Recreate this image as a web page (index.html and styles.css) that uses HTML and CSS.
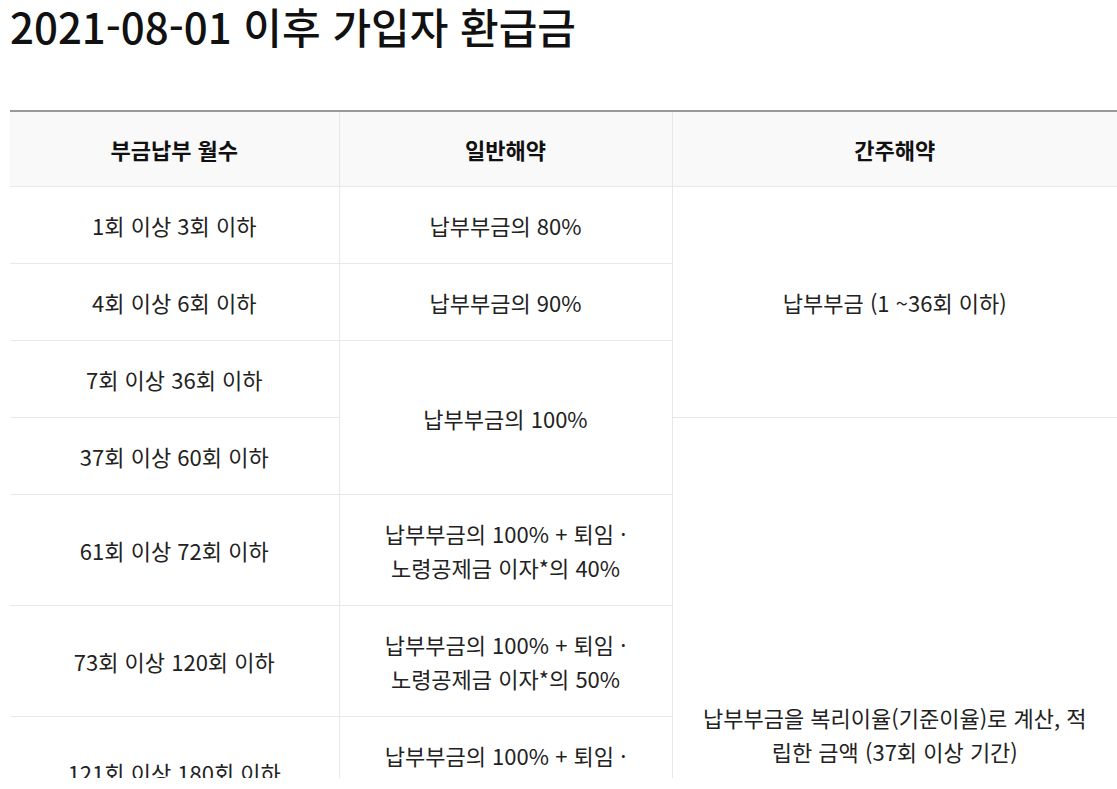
FILE: index.html
```html
<!DOCTYPE html>
<html lang="ko">
<head>
<meta charset="utf-8">
<title>2021-08-01 이후 가입자 환급금</title>
<link rel="stylesheet" href="styles.css">
</head>
<body>
<div class="page">
  <h2 class="title">2021-08-01 이후 가입자 환급금</h2>
  <table class="refund">
    <colgroup>
      <col class="c1"><col class="c2"><col class="c3">
    </colgroup>
    <thead>
      <tr><th>부금납부 월수</th><th>일반해약</th><th>간주해약</th></tr>
    </thead>
    <tbody>
      <tr><td>1회 이상 3회 이하</td><td>납부부금의 80%</td><td class="wide" rowspan="3">납부부금 (1 ~36회 이하)</td></tr>
      <tr><td>4회 이상 6회 이하</td><td>납부부금의 90%</td></tr>
      <tr><td>7회 이상 36회 이하</td><td class="mid" rowspan="2">납부부금의 100%</td></tr>
      <tr><td>37회 이상 60회 이하</td><td class="wide" rowspan="6">납부부금을 복리이율(기준이율)로 계산, 적립한 금액 (37회 이상 기간)</td></tr>
      <tr><td>61회 이상 72회 이하</td><td>납부부금의 100% + 퇴임 · 노령공제금 이자*의 40%</td></tr>
      <tr><td>73회 이상 120회 이하</td><td>납부부금의 100% + 퇴임 · 노령공제금 이자*의 50%</td></tr>
      <tr><td>121회 이상 180회 이하</td><td>납부부금의 100% + 퇴임 · 노령공제금 이자*의 60%</td></tr>
      <tr><td>181회 이상 240회 이하</td><td>납부부금의 100% + 퇴임 · 노령공제금 이자*의 70%</td></tr>
      <tr><td>241회 이상</td><td>납부부금의 100% + 퇴임 · 노령공제금 이자*의 80%</td></tr>
    </tbody>
  </table>
</div>
</body>
</html>
```

FILE: styles.css
```css
html, body {
  margin: 0;
  padding: 0;
  background: #fff;
}
body {
  font-family: "Noto Sans CJK KR", "Noto Sans", sans-serif;
  color: #222;
}
.page {
  height: 778px;
  overflow: hidden;
  padding-left: 10px;
}
.title {
  margin: 0;
  font-size: 42px;
  line-height: 52px;
  font-weight: 500;
  color: #111;
}
.refund {
  margin-top: 58px;
  width: 1107px;
  border-collapse: collapse;
  table-layout: fixed;
  border-top: 2px solid #999;
  font-size: 22px;
}
.c1 { width: 329px; }
.c2 { width: 333px; }
.c3 { width: 445px; }
.refund th {
  background: #f9f9f9;
  font-weight: 700;
  color: #111;
  height: 74px;
  padding: 0 10px;
  border-bottom: 1px solid #e8e8e8;
  border-left: 1px solid #e8e8e8;
}
.refund td {
  text-align: center;
  vertical-align: middle;
  line-height: 34px;
  padding: 21px 40px;
  border-bottom: 1px solid #e8e8e8;
  border-left: 1px solid #e8e8e8;
}
.refund td.wide {
  padding-left: 24px;
  padding-right: 24px;
}
.refund th:first-child,
.refund tr > td:first-child {
  border-left: none;
}
.refund td.mid,
.refund td.wide {
  border-left: 1px solid #e8e8e8;
}
```
